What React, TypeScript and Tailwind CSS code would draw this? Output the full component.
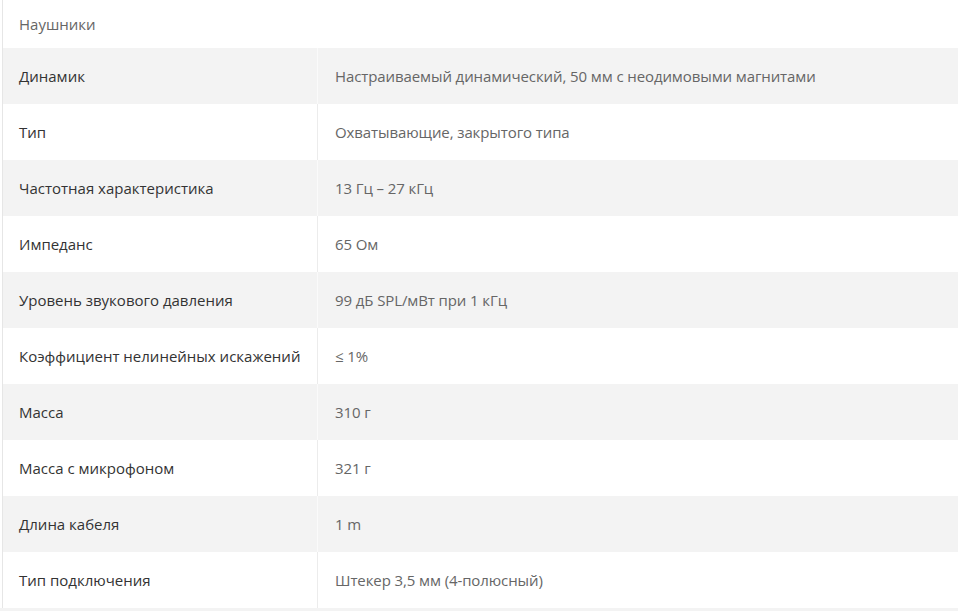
const rows: [string, string][] = [
  ["Динамик", "Настраиваемый динамический, 50 мм с неодимовыми магнитами"],
  ["Тип", "Охватывающие, закрытого типа"],
  ["Частотная характеристика", "13 Гц – 27 кГц"],
  ["Импеданс", "65 Ом"],
  ["Уровень звукового давления", "99 дБ SPL/мВт при 1 кГц"],
  ["Коэффициент нелинейных искажений", "≤ 1%"],
  ["Масса", "310 г"],
  ["Масса с микрофоном", "321 г"],
  ["Длина кабеля", "1 m"],
  ["Тип подключения", "Штекер 3,5 мм (4-полюсный)"],
];

export default function App() {
  return (
    <div className="h-[611px] w-[958px] overflow-hidden bg-white font-['Open_Sans',sans-serif] text-[15px]">
      <div className="ml-[2px] border-l border-[#e6e6e6]">
        <div className="flex h-[48px] items-center pl-[16px] text-[#666]">Наушники</div>
        {rows.map(([label, value], i) => (
          <div key={label} className={i % 2 === 0 ? "flex h-[56px] bg-[#f3f3f3]" : "flex h-[56px] bg-white"}>
            <div
              className={
                i % 2 === 0
                  ? "flex w-[315px] shrink-0 items-center border-r border-[#fafafa] pl-[16px] text-[#333]"
                  : "flex w-[315px] shrink-0 items-center border-r border-[#ececec] pl-[16px] text-[#333]"
              }
            >
              {label}
            </div>
            <div className="flex items-center pl-[17px] tracking-[-0.1px] text-[#666]">{value}</div>
          </div>
        ))}
      </div>
      <div className="h-[3px] bg-[#f3f3f3]" />
    </div>
  );
}
